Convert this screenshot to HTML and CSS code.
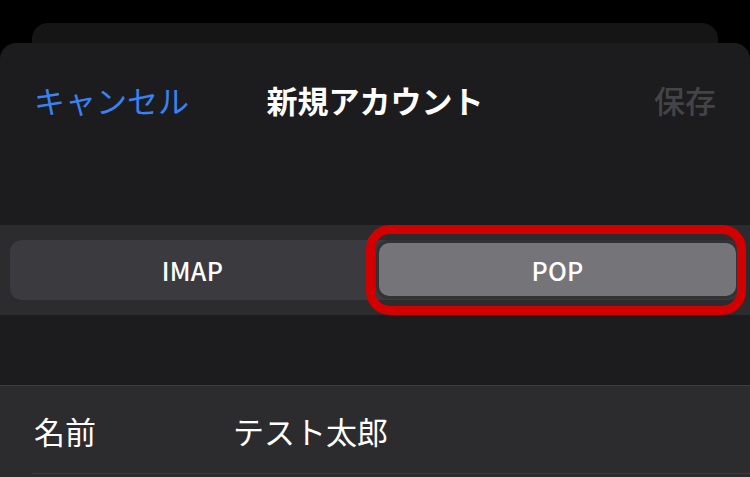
FILE: index.html
```html
<!DOCTYPE html>
<html lang="ja">
<head>
<meta charset="utf-8">
<title>新規アカウント</title>
<link rel="stylesheet" href="styles.css">
</head>
<body>
<div class="screen">
  <div class="back-card"></div>
  <div class="sheet">
    <header class="nav">
      <span class="nav-cancel">キャンセル</span>
      <span class="nav-title">新規アカウント</span>
      <span class="nav-save">保存</span>
    </header>
    <section class="seg-band">
      <div class="segmented">
        <div class="seg">IMAP</div>
        <div class="seg seg-selected">POP</div>
      </div>
      <div class="highlight"></div>
    </section>
    <section class="form">
      <div class="row">
        <span class="row-label">名前</span>
        <span class="row-value">テスト太郎</span>
      </div>
      <div class="row-next"></div>
    </section>
  </div>
</div>
</body>
</html>
```

FILE: styles.css
```css
* { box-sizing: border-box; }
html, body {
  margin: 0;
  padding: 0;
  background: #000;
  width: 750px;
  height: 477px;
  overflow: hidden;
  font-family: "Noto Sans CJK JP", "Noto Sans", sans-serif;
}
.screen {
  padding-top: 23px;
  display: flex;
  flex-direction: column;
}
.back-card {
  height: 20px;
  flex-shrink: 0;
  margin: 0 32px;
  background: #151515;
  border-radius: 16px 16px 0 0;
}
.sheet {
  background: #1c1c1e;
  border-radius: 16px 16px 0 0;
  height: 434px;
  display: flex;
  flex-direction: column;
  overflow: hidden;
}
.sheet > * { flex-shrink: 0; }
.nav {
  height: 112px;
  display: flex;
  align-items: center;
  justify-content: space-between;
  padding: 0 34px 0 34px;
  position: relative;
  font-size: 31px;
  line-height: 1;
}
.nav-cancel { color: #3a82f2; }
.nav-title {
  color: #fff;
  font-weight: 700;
  position: absolute;
  left: 0;
  right: 0;
  text-align: center;
  pointer-events: none;
}
.nav-save { color: #444446; font-weight: 500; }
.seg-band {
  margin-top: 70px;
  height: 90px;
  background: #2c2c2e;
  padding: 15px 10px;
  position: relative;
}
.segmented {
  height: 60px;
  background: #3b3a3f;
  border-radius: 12px;
  padding: 3px 4px 4px 4px;
  display: grid;
  grid-template-columns: 1fr 1fr;
  gap: 8px;
}
.seg {
  display: flex;
  align-items: center;
  justify-content: center;
  color: #fff;
  font-size: 25px;
  font-weight: 500;
  letter-spacing: 0.3px;
  border-radius: 10px;
}
.seg-selected {
  background: #757478;
  box-shadow: 0 0 0 3px #323235;
}
.highlight {
  position: absolute;
  left: 366px;
  top: 0;
  width: 380px;
  height: 90px;
  border: 9px solid #d20000;
  border-radius: 24px;
}
.form {
  margin-top: 70px;
  border-top: 1px solid #3c3c3f;
  background: #2c2c2e;
  flex: 1 1 auto;
}
.row {
  height: 88px;
  display: flex;
  align-items: center;
  padding-left: 34px;
  font-size: 31px;
  color: #fff;
  position: relative;
}
.row-label { width: 199px; }
.row::after {
  content: "";
  position: absolute;
  left: 32px;
  right: 0;
  bottom: 0;
  height: 1px;
  background: #3c3c3f;
}
.row-next { height: 3px; }
```
